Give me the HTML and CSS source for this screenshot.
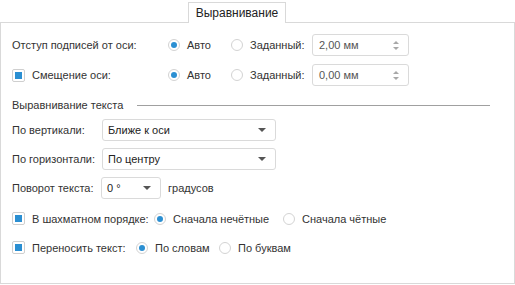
FILE: index.html
```html
<!DOCTYPE html>
<html lang="ru">
<head>
    <meta charset="UTF-8">
    <title>Выравнивание</title>
    <link rel="stylesheet" href="styles.css">
</head>
<body>
    <div class="tabs">
        <div class="tab">Выравнивание</div>
    </div>
    <div class="panel">
        <div class="row row-first">
            <span class="label label-wide">Отступ подписей от оси:</span>
            <span class="radio checked"></span><span class="opt opt-auto">Авто</span>
            <span class="radio"></span><span class="opt opt-set">Заданный:</span>
            <div class="spin"><span>2,00 мм</span><span class="arrows"><i class="up"></i><i class="down"></i></span></div>
        </div>
        <div class="row">
            <span class="check checked"></span>
            <span class="label label-chk">Смещение оси:</span>
            <span class="radio checked"></span><span class="opt opt-auto">Авто</span>
            <span class="radio"></span><span class="opt opt-set">Заданный:</span>
            <div class="spin"><span>0,00 мм</span><span class="arrows"><i class="up"></i><i class="down"></i></span></div>
        </div>

        <div class="section">
            <span>Выравнивание текста</span>
            <div class="line"></div>
        </div>

        <div class="row row-combo">
            <span class="label label-mid">По вертикали:</span>
            <div class="combo combo-wide"><span>Ближе к оси</span><i class="drop"></i></div>
        </div>
        <div class="row row-combo">
            <span class="label label-mid">По горизонтали:</span>
            <div class="combo combo-wide"><span>По центру</span><i class="drop"></i></div>
        </div>
        <div class="row row-combo">
            <span class="label label-mid">Поворот текста:</span>
            <div class="combo combo-small"><span>0 °</span><i class="drop"></i></div>
            <span class="unit">градусов</span>
        </div>

        <div class="row row-opt row-chess">
            <span class="check checked"></span>
            <span class="label label-chess">В шахматном порядке:</span>
            <span class="radio checked"></span><span class="opt opt-odd">Сначала нечётные</span>
            <span class="radio"></span><span class="opt">Сначала чётные</span>
        </div>
        <div class="row row-opt">
            <span class="check checked"></span>
            <span class="label label-wrap">Переносить текст:</span>
            <span class="radio checked"></span><span class="opt opt-words">По словам</span>
            <span class="radio"></span><span class="opt">По буквам</span>
        </div>
    </div>
</body>
</html>
```

FILE: styles.css
```css
body {
    margin: 0;
    font-family: "Liberation Sans", Arial, sans-serif;
    font-size: 11px;
    color: #333;
    background: #fff;
    width: 515px;
    height: 285px;
    overflow: hidden;
}

.tabs {
    display: flex;
    padding: 1px 0 0 188px;
    height: 21px;
}
.tab {
    width: 96px;
    border: 1px solid #d9d9d9;
    border-bottom: none;
    background: #fff;
    text-align: center;
    line-height: 21px;
    font-size: 12px;
    color: #222;
    position: relative;
    top: 1px;
}

.panel {
    border: 1px solid #d9d9d9;
    width: 515px;
    height: 262px;
    padding: 0 0 0 11px;
    box-sizing: border-box;
}

.row {
    display: flex;
    align-items: center;
    height: 30px;
}
.row-first {
    margin-top: 7px;
}

.label {
    white-space: nowrap;
    margin-right: 6px;
}
.label-wide {
    width: 150px;
}
.label-chk {
    width: 130px;
}
.label-mid {
    width: 84px;
}
.label-chess {
    width: 116px;
}
.label-wrap {
    width: 98px;
}

.check {
    width: 11px;
    height: 11px;
    border: 1px solid #cfcfcf;
    border-radius: 2px;
    background: #fff;
    display: flex;
    align-items: center;
    justify-content: center;
    margin-right: 7px;
}
.check.checked::after {
    content: "";
    width: 7px;
    height: 7px;
    background: #2b8fd2;
}

.radio {
    width: 10px;
    height: 10px;
    border: 1px solid #d3d3d3;
    border-radius: 50%;
    display: flex;
    align-items: center;
    justify-content: center;
    margin-right: 7px;
}
.radio.checked::after {
    content: "";
    width: 6px;
    height: 6px;
    border-radius: 50%;
    background: #2b8fd2;
}
.opt {
    margin-right: 12px;
    white-space: nowrap;
}
.opt-auto {
    width: 32px;
}
.opt-set {
    width: 55px;
    margin-right: 7px;
}
.opt-odd {
    width: 98px;
}
.opt-words {
    width: 52px;
}

.spin {
    width: 97px;
    height: 22px;
    border: 1px solid #dadada;
    border-radius: 3px;
    display: flex;
    align-items: center;
    justify-content: space-between;
    padding-left: 6px;
    box-sizing: border-box;
    color: #555;
}
.arrows {
    display: flex;
    flex-direction: column;
    gap: 3px;
    margin-right: 9px;
}
.arrows i {
    width: 0;
    height: 0;
    border-left: 3px solid transparent;
    border-right: 3px solid transparent;
}
.arrows .up {
    border-bottom: 3px solid #a8a8a8;
}
.arrows .down {
    border-top: 3px solid #a8a8a8;
}

.section {
    display: flex;
    align-items: center;
    margin-top: 5px;
    height: 20px;
    margin-right: 24px;
}
.section .line {
    flex: 1;
    height: 1px;
    background: #a0a0a0;
    margin-left: 14px;
}

.row-combo {
    height: 29px;
}
.combo {
    height: 22px;
    border: 1px solid #dadada;
    border-radius: 3px;
    display: flex;
    align-items: center;
    justify-content: space-between;
    padding-left: 5px;
    box-sizing: border-box;
    color: #222;
}
.combo-wide {
    width: 174px;
}
.combo-small {
    width: 60px;
    margin-left: -1px;
}
.drop {
    width: 0;
    height: 0;
    border-left: 4px solid transparent;
    border-right: 4px solid transparent;
    border-top: 4px solid #555;
    margin-right: 9px;
}
.unit {
    margin-left: 7px;
}

.row-opt {
    height: 29px;
}
.row-chess {
    margin-top: 2px;
}
```
